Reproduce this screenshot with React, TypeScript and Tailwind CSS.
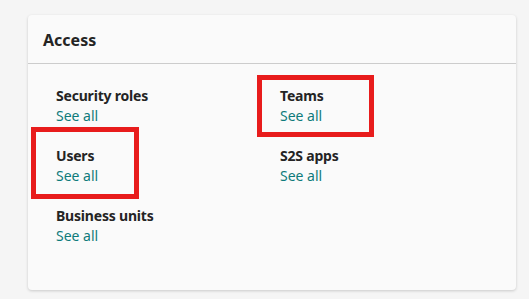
const items = [
  { name: "Security roles" },
  { name: "Teams" },
  { name: "Users" },
  { name: "S2S apps" },
  { name: "Business units" },
];

export default function App() {
  return (
    <div
      className="relative w-[529px] h-[299px] bg-[#f5f5f5] pt-[15px] pl-[28px]"
      style={{ fontFamily: '"Segoe UI", "Noto Sans", sans-serif' }}
    >
      <div className="w-[488px] h-[275px] bg-[#fafafa] rounded-[4px] shadow-[0_1px_3px_rgba(0,0,0,0.18)]">
        <div className="h-[49px] flex items-center pl-[15px] pt-[2px] border-b border-[#cccccc]">
          <h2 className="text-[16px] font-bold text-[#242424]">Access</h2>
        </div>
        <div className="grid grid-cols-[224px_1fr] gap-y-[20px] pl-[28px] pt-[22px]">
          {items.map((item) => (
            <div key={item.name} className="flex flex-col">
              <span className="text-[14px] leading-[20px] font-bold text-[#242424] tracking-[-0.2px]">
                {item.name}
              </span>
              <a href="#" className="text-[14px] leading-[20px] text-[#0f7b7b]">
                See all
              </a>
            </div>
          ))}
        </div>
      </div>

      {/* highlight boxes */}
      <div className="absolute left-[257px] top-[75px] w-[117px] h-[62px] border-[5px] border-[#e81c1c]" />
      <div className="absolute left-[31px] top-[127px] w-[108px] h-[72px] border-[5px] border-[#e81c1c]" />
    </div>
  );
}
